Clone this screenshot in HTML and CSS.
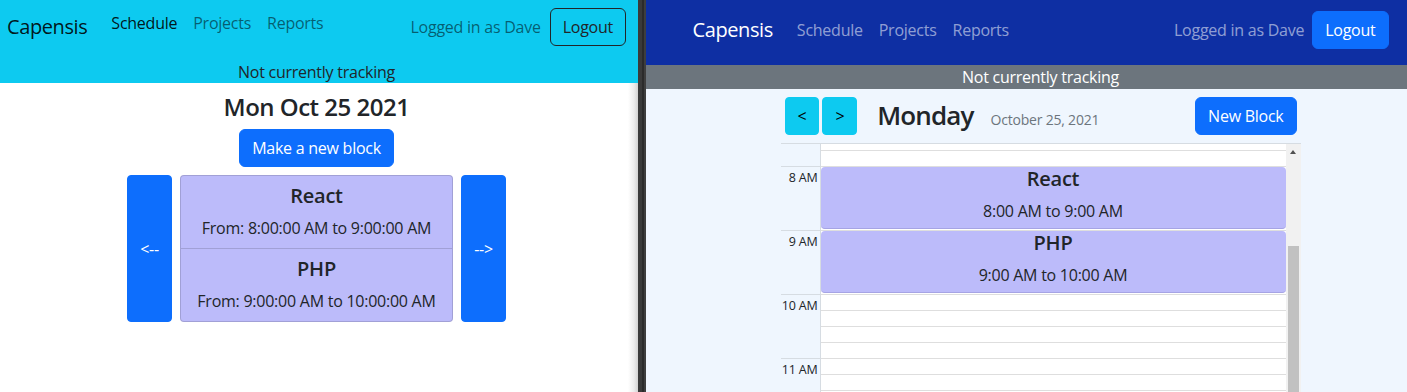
FILE: index.html
```html
<!DOCTYPE html>
<html lang="en">
<head>
<meta charset="utf-8">
<title>Capensis</title>
<link rel="stylesheet" href="styles.css">
</head>
<body>
<div class="app">
  <section class="pane pane-left">
    <nav class="nav-light">
      <div class="nav-row">
        <a class="brand">Capensis</a>
        <ul class="links">
          <li class="active">Schedule</li>
          <li>Projects</li>
          <li>Reports</li>
        </ul>
        <span class="user">Logged in as Dave</span>
        <button class="btn btn-outline">Logout</button>
      </div>
      <div class="status">Not currently tracking</div>
    </nav>
    <main class="day">
      <h1 class="day-title">Mon Oct 25 2021</h1>
      <button class="btn btn-primary">Make a new block</button>
      <div class="day-row">
        <button class="btn btn-primary btn-arrow">&lt;--</button>
        <div class="blocks">
          <div class="block">
            <h5>React</h5>
            <p>From: 8:00:00 AM to 9:00:00 AM</p>
          </div>
          <div class="block">
            <h5>PHP</h5>
            <p>From: 9:00:00 AM to 10:00:00 AM</p>
          </div>
        </div>
        <button class="btn btn-primary btn-arrow">--&gt;</button>
      </div>
    </main>
  </section>

  <div class="divider"></div>

  <section class="pane pane-right">
    <nav class="nav-dark">
      <div class="nav-row">
        <a class="brand">Capensis</a>
        <ul class="links">
          <li>Schedule</li>
          <li>Projects</li>
          <li>Reports</li>
        </ul>
        <span class="user">Logged in as Dave</span>
        <button class="btn btn-primary">Logout</button>
      </div>
    </nav>
    <div class="status-bar">Not currently tracking</div>

    <div class="cal">
      <div class="cal-head">
        <div class="cal-nav">
          <button class="btn btn-info">&lt;</button>
          <button class="btn btn-info">&gt;</button>
        </div>
        <div class="cal-title">
          <h2>Monday</h2>
          <span class="cal-date">October 25, 2021</span>
        </div>
        <button class="btn btn-primary btn-new">New Block</button>
      </div>
      <div class="cal-body">
        <div class="cal-scroll">
          <div class="cal-content">
            <div class="axis">
              <div class="hour partial"></div>
              <div class="hour"><span>8 AM</span></div>
              <div class="hour"><span>9 AM</span></div>
              <div class="hour"><span>10 AM</span></div>
              <div class="hour"><span>11 AM</span></div>
            </div>
            <div class="grid">
              <div class="slot"></div><div class="slot"></div><div class="slot"></div><div class="slot"></div>
              <div class="slot"></div><div class="slot"></div><div class="slot"></div><div class="slot"></div>
              <div class="slot"></div><div class="slot"></div><div class="slot"></div><div class="slot"></div>
              <div class="slot"></div><div class="slot"></div><div class="slot"></div><div class="slot"></div>
              <div class="slot"></div><div class="slot"></div>
              <div class="event" style="top:32px">
                <h5>React</h5>
                <p>8:00 AM to 9:00 AM</p>
              </div>
              <div class="event" style="top:96px">
                <h5>PHP</h5>
                <p>9:00 AM to 10:00 AM</p>
              </div>
            </div>
          </div>
        </div>
        <div class="scrollbar">
          <span class="sb-up"></span>
          <span class="sb-thumb"></span>
        </div>
      </div>
    </div>
  </section>
</div>
</body>
</html>
```

FILE: styles.css
```css
* {
  box-sizing: border-box;
  margin: 0;
  padding: 0;
}

body {
  margin: 0;
  width: 1407px;
  height: 392px;
  overflow: hidden;
  font-family: "Open Sans", "Noto Sans", sans-serif;
  font-size: 16px;
  line-height: 1.5;
  letter-spacing: -0.25px;
  color: #212529;
}

.app {
  display: flex;
  width: 1435px;
  height: 392px;
}

.pane-left {
  flex: 0 0 638px;
  display: flex;
  flex-direction: column;
  background: #fff;
}

.divider {
  flex: 0 0 8px;
  background: linear-gradient(to right, #3a3a3a 0 4px, #2b2b2b 4px 6px, #3e3e3e 6px);
}

.pane-right {
  flex: 0 0 789px;
  display: flex;
  flex-direction: column;
  background: #eff6fe;
}

/* ---------- navbars ---------- */
.nav-row {
  display: flex;
  align-items: center;
  height: 39px;
}

.brand {
  font-size: 20px;
  line-height: 30px;
  letter-spacing: -0.4px;
  margin-right: 16px;
}

.links {
  display: flex;
  list-style: none;
  margin-right: auto;
}

.links li {
  padding: 0 8px;
}

.nav-light {
  background: #0dcaf0;
  height: 83px;
  padding: 7px 12px 0 7px;
}

.nav-light .brand {
  color: rgba(0, 0, 0, .9);
}

.nav-light .links {
  align-self: flex-start;
  padding-top: 4px;
}

.nav-light .links li,
.nav-light .user {
  color: rgba(0, 0, 0, .55);
}

.nav-light .links li.active {
  color: rgba(0, 0, 0, .9);
}

.user {
  margin-right: 9px;
}

.status {
  margin-top: 14px;
  line-height: 24px;
  text-align: center;
}

.nav-dark {
  background: #0e2fa3;
  height: 65px;
  padding-top: 11px;
}

.nav-dark .nav-row {
  max-width: 720px;
  margin: 0 auto;
  padding: 0 12px;
  height: 38px;
}

.nav-dark .brand {
  color: #fff;
}

.nav-dark .links li,
.nav-dark .user {
  color: rgba(255, 255, 255, .55);
}

.nav-dark .user {
  margin-right: 8px;
}

.status-bar {
  background: #6c757d;
  color: #fff;
  line-height: 24px;
  text-align: center;
}

/* ---------- buttons ---------- */
.btn {
  font: inherit;
  font-size: 16px;
  line-height: 24px;
  letter-spacing: -0.25px;
  padding: 6px 12px;
  border: 1px solid transparent;
  border-radius: 6px;
  cursor: pointer;
}

.btn-outline {
  background: transparent;
  border-color: #212529;
  color: #212529;
}

.btn-primary {
  background: #0d6efd;
  border-color: #0d6efd;
  color: #fff;
}

.btn-info {
  background: #0dcaf0;
  border-color: #0dcaf0;
  color: #000;
  border-radius: 4px;
}

/* ---------- left day view ---------- */
.day {
  flex: 1;
  display: flex;
  flex-direction: column;
  align-items: center;
  gap: 8px;
  padding: 9px 5px 0 0;
  background: linear-gradient(to right, #fff calc(100% - 10px), #ececec calc(100% - 4px), #d2d2d2);
}

.day-title {
  font-size: 24px;
  font-weight: 600;
  line-height: 29px;
  letter-spacing: -0.5px;
}

.day-row {
  display: flex;
  gap: 8px;
}

.btn-arrow {
  width: 45px;
  padding: 0;
  border-radius: 4px;
}

.blocks {
  width: 273px;
  background: #bcbbfa;
  border: 1px solid rgba(0, 0, 0, .14);
  border-radius: 4px;
}

.block {
  padding: 8px;
  text-align: center;
}

.block + .block {
  border-top: 1px solid rgba(0, 0, 0, .14);
}

.block h5,
.event h5 {
  font-size: 20px;
  font-weight: 600;
  line-height: 24px;
}

.block h5 {
  margin-bottom: 8px;
}

/* ---------- right calendar ---------- */
.cal {
  width: 520px;
  margin: 8px auto 0;
  flex: 1;
  min-height: 0;
  display: flex;
  flex-direction: column;
}

.cal-head {
  display: flex;
  align-items: center;
  height: 38px;
  padding: 0 4px;
}

.cal-nav {
  display: flex;
  gap: 3px;
}

.cal-title {
  display: flex;
  align-items: baseline;
  margin-left: 20px;
}

.cal-title h2 {
  font-size: 26px;
  font-weight: 600;
  line-height: 1.2;
  letter-spacing: -0.9px;
}

.cal-date {
  font-size: 14px;
  color: #6c757d;
  margin-left: 17px;
  letter-spacing: -0.2px;
}

.btn-new {
  margin-left: auto;
}

.cal-body {
  margin-top: 8px;
  flex: 1;
  min-height: 0;
  display: flex;
  border-top: 1px solid #d6dce2;
  overflow: hidden;
}

.cal-scroll {
  flex: 1;
  display: flex;
  overflow: hidden;
}

.cal-content {
  flex: 1;
  display: flex;
  align-self: flex-start;
  margin-top: -9px;
}

.axis {
  flex: 0 0 40px;
  border-right: 1px solid #d6dce2;
}

.hour {
  height: 64px;
  border-bottom: 1px solid #d6dce2;
  padding: 3px 2px 0 0;
  font-size: 12.5px;
  line-height: 16px;
  letter-spacing: -0.2px;
  text-align: right;
}

.hour.partial {
  height: 32px;
}

.grid {
  flex: 1;
  position: relative;
  background: #fff;
}

.slot {
  height: 16px;
  border-bottom: 1px solid #dedede;
}

.event {
  position: absolute;
  left: 0;
  right: 0;
  height: 62px;
  background: #bcbbfa;
  border-radius: 4px;
  border-bottom: 1px solid #a6a4e4;
  text-align: center;
}

.event p {
  margin-top: 8px;
  line-height: 24px;
}

.scrollbar {
  flex: 0 0 15px;
  background: #f1f1f1;
  display: flex;
  flex-direction: column;
}

.sb-up {
  display: block;
  width: 0;
  height: 0;
  margin: 6px auto 0;
  border-left: 3.5px solid transparent;
  border-right: 3.5px solid transparent;
  border-bottom: 4px solid #505050;
}

.sb-thumb {
  display: block;
  height: 200px;
  margin: 92px 2px 0;
  background: #c1c1c1;
}
```
